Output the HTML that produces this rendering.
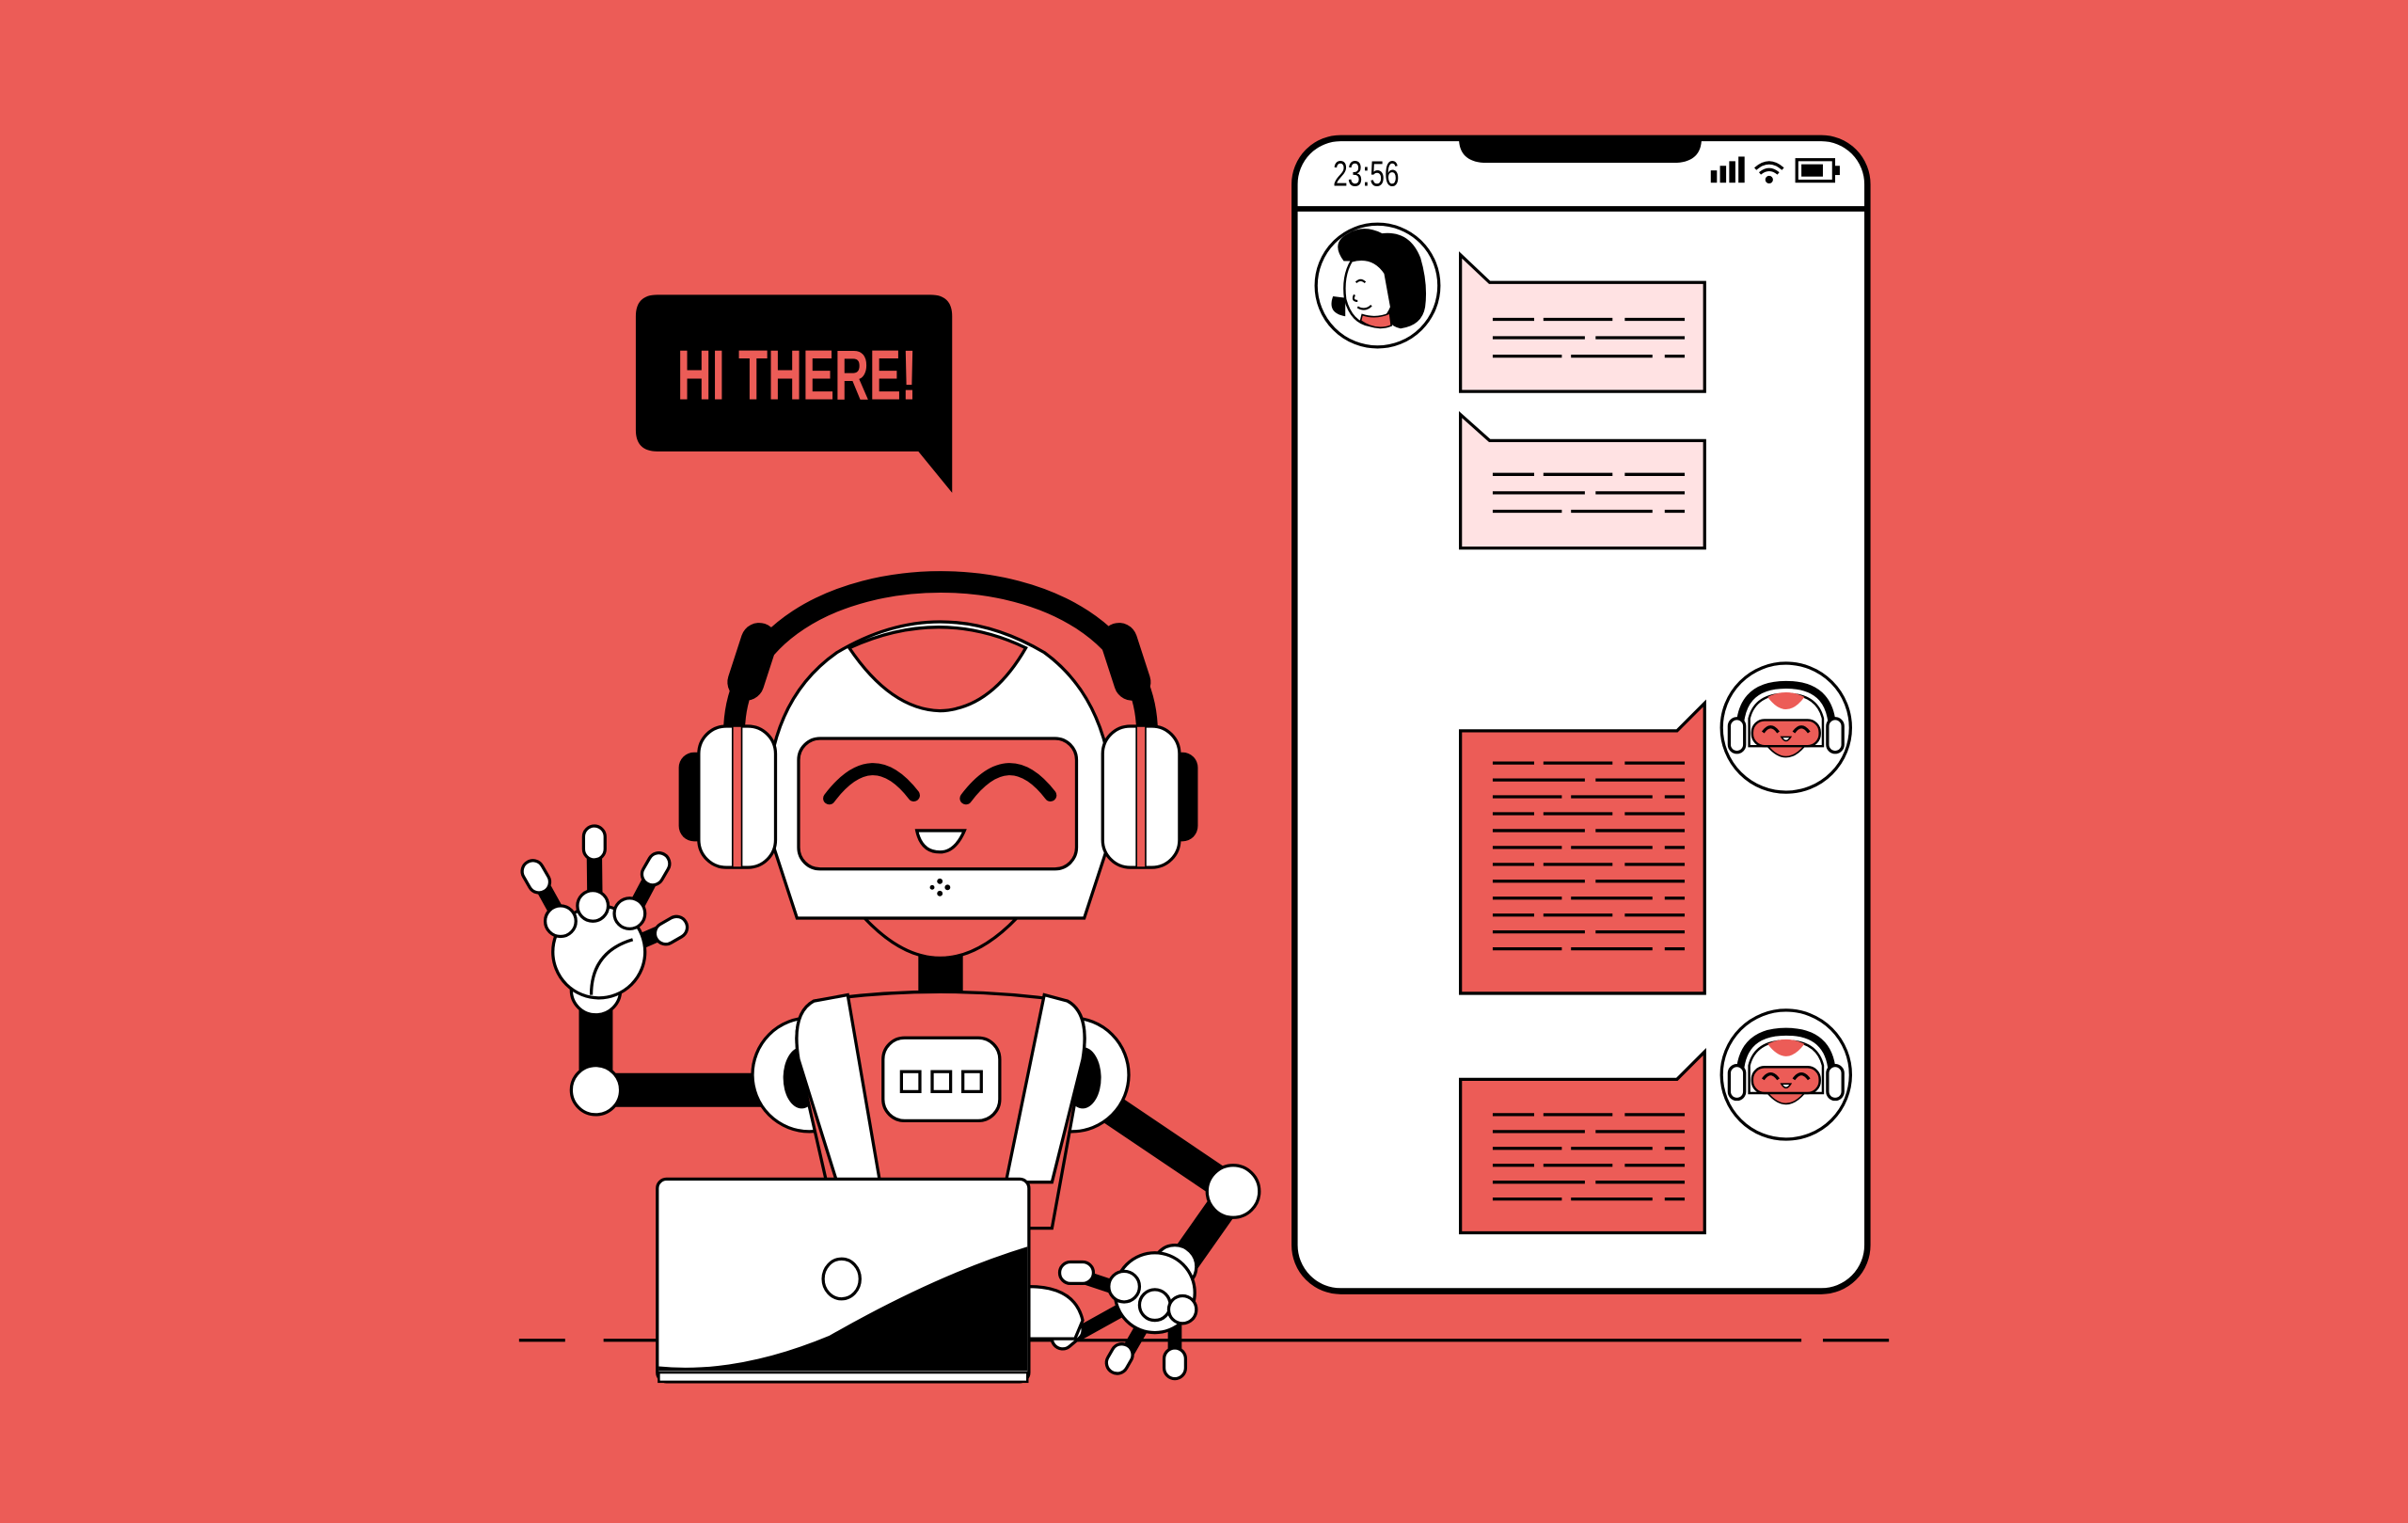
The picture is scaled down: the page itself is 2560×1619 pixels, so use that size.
<!DOCTYPE html>
<html><head><meta charset="utf-8"><style>html,body{margin:0;padding:0;background:#EC5C57;overflow:hidden}svg{display:block}</style></head>
<body>
<svg width="2560" height="1619" viewBox="0 0 1568 992" preserveAspectRatio="none" xmlns="http://www.w3.org/2000/svg">
<defs>
<g id="mini">
<circle cx="0" cy="0" r="42" fill="#fff" stroke="#000" stroke-width="2"/>
<path d="M-30 6 Q-32 -28 0 -28 Q32 -28 30 6" fill="none" stroke="#000" stroke-width="5"/>
<path d="M-24 -6 Q-20 -22 0 -22 Q20 -22 24 -6 L24 12 L-24 12 Z" fill="#fff" stroke="#000" stroke-width="1.5"/>
<path d="M-12 -20 Q0 -4 12 -20 Q0 -26 -12 -20Z" fill="#EC5C57"/>
<path d="M-12 12 Q0 26 12 12Z" fill="#EC5C57" stroke="#000" stroke-width="1"/>
<rect x="-22" y="-5" width="44" height="17" rx="8" fill="#EC5C57" stroke="#000" stroke-width="1.5"/>
<path d="M-15 3 Q-10 -4 -5 3 M5 3 Q10 -4 15 3" fill="none" stroke="#000" stroke-width="2"/>
<path d="M-3 6 L3 6 Q0 11 -3 6Z" fill="#fff" stroke="#000" stroke-width="1"/>
<rect x="-37" y="-6" width="10" height="22" rx="5" fill="#fff" stroke="#000" stroke-width="2"/>
<rect x="27" y="-6" width="10" height="22" rx="5" fill="#fff" stroke="#000" stroke-width="2"/>
</g>
<path id="l3" d="M0 0h27m6 0h45m8 0h39M0 12h60m7 0h58M0 24h45m6 0h53m8 0h13" />
<path id="l3r" d="M0 0h27m6 0h45m8 0h39M0 11h60m7 0h58M0 22h45m6 0h53m8 0h13" />
</defs>
<rect width="1568" height="992" fill="#EC5C57"/>
<g stroke="#000" stroke-width="2">
<line x1="338" y1="873" x2="368" y2="873"/><line x1="393" y1="873" x2="428" y2="873"/>
<line x1="670" y1="873" x2="1173" y2="873"/><line x1="1187" y1="873" x2="1230" y2="873"/>
</g>
<!-- speech bubble -->
<path d="M428 192 H606 Q620 192 620 206 V321 L598 294 H428 Q414 294 414 280 V206 Q414 192 428 192Z" fill="#000"/>
<text x="519" y="260" text-anchor="middle" font-family="Liberation Sans, sans-serif" font-weight="bold" font-size="46" fill="#EC5C57" transform="translate(519 0) scale(0.68 1) translate(-519 0)">HI THERE!</text>
<!-- phone -->
<rect x="843" y="90" width="373" height="751" rx="30" fill="#fff" stroke="#000" stroke-width="4"/>
<path d="M950 90 H1108 Q1108 105 1092 106 H966 Q950 105 950 90Z" fill="#000"/>
<line x1="843" y1="136" x2="1216" y2="136" stroke="#000" stroke-width="3.5"/>
<text x="868" y="121" font-family="Liberation Sans, sans-serif" font-size="23" fill="#000" transform="translate(868 0) scale(0.75 1) translate(-868 0)">23:56</text>
<g fill="#000">
<rect x="1114" y="111" width="4" height="8"/><rect x="1120" y="108" width="4" height="11"/><rect x="1126" y="105" width="4" height="14"/><rect x="1132" y="102" width="4" height="17"/>
<circle cx="1152" cy="117" r="2.5"/>
</g>
<path d="M1143 110 Q1152 102 1161 110 M1146 113 Q1152 108 1158 113" fill="none" stroke="#000" stroke-width="2"/>
<rect x="1170" y="104" width="24" height="14" fill="none" stroke="#000" stroke-width="2"/>
<rect x="1173" y="107" width="14" height="8" fill="#000"/><rect x="1195" y="108" width="3" height="6" fill="#000"/>
<!-- woman avatar -->
<circle cx="897" cy="186" r="40" fill="#fff" stroke="#000" stroke-width="2"/>
<path d="M875 170 Q866 158 878 152 Q888 146 900 152 Q918 150 925 168 Q930 185 928 200 Q926 212 912 214 Q902 212 902 200 L900 178 Q895 165 880 170 Z" fill="#000"/>
<path d="M880 170 Q874 180 876 195 Q880 210 892 212 Q902 210 906 200 L902 178 Q894 166 880 170Z" fill="#fff" stroke="#000" stroke-width="1.5"/>
<path d="M868 193 Q864 204 876 206 L876 194Z" fill="#000"/>
<path d="M886 209 Q896 216 906 212 L905 204 Q896 208 887 205Z" fill="#EC5C57" stroke="#000" stroke-width="1"/>
<path d="M883 184 Q886 181 889 184 M882 192 Q880 196 884 196 M884 200 Q889 203 893 199" fill="none" stroke="#000" stroke-width="1.3"/>
<!-- pink bubbles -->
<path d="M951 166 L970 184 H1110 V255 H951Z" fill="#FFE2E3" stroke="#000" stroke-width="2"/>
<path d="M951 270 L970 287 H1110 V357 H951Z" fill="#FFE2E3" stroke="#000" stroke-width="2"/>
<!-- red bubbles -->
<path d="M951 476 H1092 L1110 458 V647 H951Z" fill="#EC5C57" stroke="#000" stroke-width="2"/>
<path d="M951 703 H1092 L1110 685 V803 H951Z" fill="#EC5C57" stroke="#000" stroke-width="2"/>
<g stroke="#000" stroke-width="2" fill="none">
<use href="#l3" x="972" y="208"/>
<use href="#l3" x="972" y="309"/>
<use href="#l3r" x="972" y="497"/>
<use href="#l3r" x="972" y="530"/>
<use href="#l3r" x="972" y="563"/>
<use href="#l3r" x="972" y="596"/>
<use href="#l3r" x="972" y="726"/>
<use href="#l3r" x="972" y="759"/>
</g>
<use href="#mini" x="1163" y="474"/>
<use href="#mini" x="1163" y="700"/>
<!-- left arm -->
<path d="M500 710 H388 V630" fill="none" stroke="#000" stroke-width="22"/>
<circle cx="388" cy="710" r="16" fill="#fff" stroke="#000" stroke-width="2"/>
<g stroke="#000" stroke-width="10" fill="none"><path d="M388 640 L352 575 M388 640 L387 555 M388 640 L425 570 M390 625 L436 605"/></g>
<g fill="#fff" stroke="#000" stroke-width="2">
<rect x="342" y="560" width="14" height="22" rx="7" transform="rotate(-30 349 571)"/>
<rect x="380" y="538" width="14" height="22" rx="7"/>
<rect x="420" y="555" width="14" height="22" rx="7" transform="rotate(30 427 566)"/>
<rect x="430" y="595" width="14" height="22" rx="7" transform="rotate(60 437 606)"/>
<circle cx="388" cy="645" r="16"/>
<circle cx="390" cy="620" r="30"/>
<circle cx="365" cy="600" r="10"/><circle cx="386" cy="590" r="10"/><circle cx="410" cy="595" r="10"/>
<path d="M385 648 Q385 620 412 612" fill="none"/>
</g>
<!-- right arm -->
<path d="M720 720 L803 776 L765 830" fill="none" stroke="#000" stroke-width="20"/>
<circle cx="803" cy="776" r="17" fill="#fff" stroke="#000" stroke-width="2"/>
<g stroke="#000" stroke-width="9" fill="none"><path d="M745 845 L700 830 M745 845 L700 870 M752 850 L730 888 M765 855 L765 888"/></g>
<g fill="#fff" stroke="#000" stroke-width="2">
<circle cx="765" cy="825" r="14"/>
<circle cx="752" cy="842" r="26"/>
<rect x="690" y="822" width="22" height="14" rx="7"/>
<rect x="688" y="858" width="14" height="22" rx="7" transform="rotate(50 695 869)"/>
<rect x="722" y="875" width="14" height="20" rx="7" transform="rotate(30 729 885)"/>
<rect x="758" y="878" width="14" height="20" rx="7"/>
<circle cx="732" cy="838" r="10"/><circle cx="752" cy="850" r="10"/><circle cx="770" cy="853" r="9"/>
<path d="M670 838 Q700 838 705 860 L700 872 H670Z"/>
</g>
<!-- torso -->
<circle cx="527" cy="700" r="37" fill="#fff" stroke="#000" stroke-width="2"/>
<circle cx="698" cy="700" r="37" fill="#fff" stroke="#000" stroke-width="2"/>
<ellipse cx="522" cy="702" rx="12" ry="20" fill="#000"/>
<ellipse cx="705" cy="702" rx="12" ry="20" fill="#000"/>
<path d="M598 620 H627 V648 H598Z" fill="#000"/>
<path d="M530 652 Q612 640 695 652 Q710 660 705 690 L685 800 H545 L520 690 Q515 660 530 652Z" fill="#EC5C57" stroke="#000" stroke-width="2"/>
<path d="M530 652 L552 648 L573 770 H545 L520 690 Q515 660 530 652Z" fill="#fff" stroke="#000" stroke-width="2"/>
<path d="M695 652 L680 648 L655 770 H685 L705 690 Q710 660 695 652Z" fill="#fff" stroke="#000" stroke-width="2"/>
<rect x="575" y="676" width="76" height="54" rx="14" fill="#fff" stroke="#000" stroke-width="2"/>
<g fill="#fff" stroke="#000" stroke-width="2"><rect x="587" y="698" width="12" height="13"/><rect x="607" y="698" width="12" height="13"/><rect x="627" y="698" width="12" height="13"/></g>
<!-- headband -->
<path d="M478 478 C478 346 747 346 747 478" fill="none" stroke="#000" stroke-width="14"/>
<rect x="478" y="405" width="24" height="52" rx="12" fill="#000" transform="rotate(18 490 431)"/>
<rect x="721" y="405" width="24" height="52" rx="12" fill="#000" transform="rotate(-18 733 431)"/>
<!-- chin -->
<path d="M563 598 Q612 650 662 598Z" fill="#EC5C57" stroke="#000" stroke-width="2"/>
<!-- head -->
<path d="M519 598 L500 540 Q495 460 545 425 Q612 385 680 425 Q728 460 725 540 L706 598Z" fill="#fff" stroke="#000" stroke-width="2"/>
<path d="M553 422 Q580 462 612 463 Q645 462 668 422 Q612 395 553 422Z" fill="#EC5C57" stroke="#000" stroke-width="2"/>
<rect x="520" y="481" width="181" height="85" rx="14" fill="#EC5C57" stroke="#000" stroke-width="2"/>
<path d="M540 520 Q568 483 595 518 M629 520 Q657 483 684 518" fill="none" stroke="#000" stroke-width="8" stroke-linecap="round"/>
<path d="M597 541 H628 Q622 555 612 555 Q600 555 597 541Z" fill="#fff" stroke="#000" stroke-width="2"/>
<g fill="#000"><circle cx="612" cy="574" r="1.8"/><circle cx="607" cy="578" r="1.5"/><circle cx="617" cy="578" r="1.8"/><circle cx="612" cy="582" r="1.8"/></g>
<!-- earcups -->
<rect x="442" y="490" width="22" height="58" rx="10" fill="#000"/>
<rect x="758" y="490" width="22" height="58" rx="10" fill="#000"/>
<rect x="455" y="473" width="50" height="92" rx="18" fill="#fff" stroke="#000" stroke-width="2"/>
<rect x="718" y="473" width="50" height="92" rx="18" fill="#fff" stroke="#000" stroke-width="2"/>
<rect x="477" y="473" width="6" height="92" fill="#EC5C57" stroke="#000" stroke-width="1"/>
<rect x="740" y="473" width="6" height="92" fill="#EC5C57" stroke="#000" stroke-width="1"/>
<!-- laptop -->
<rect x="428" y="768" width="242" height="132" rx="6" fill="#fff" stroke="#000" stroke-width="2"/>
<path d="M429 890 Q480 895 540 870 Q610 830 669 812 V893 H429Z" fill="#000"/>
<rect x="429" y="894" width="240" height="6" fill="#fff" stroke="#000" stroke-width="1.5"/>
<ellipse cx="548" cy="833" rx="12" ry="13" fill="#fff" stroke="#000" stroke-width="2"/>
</svg>
</body></html>
